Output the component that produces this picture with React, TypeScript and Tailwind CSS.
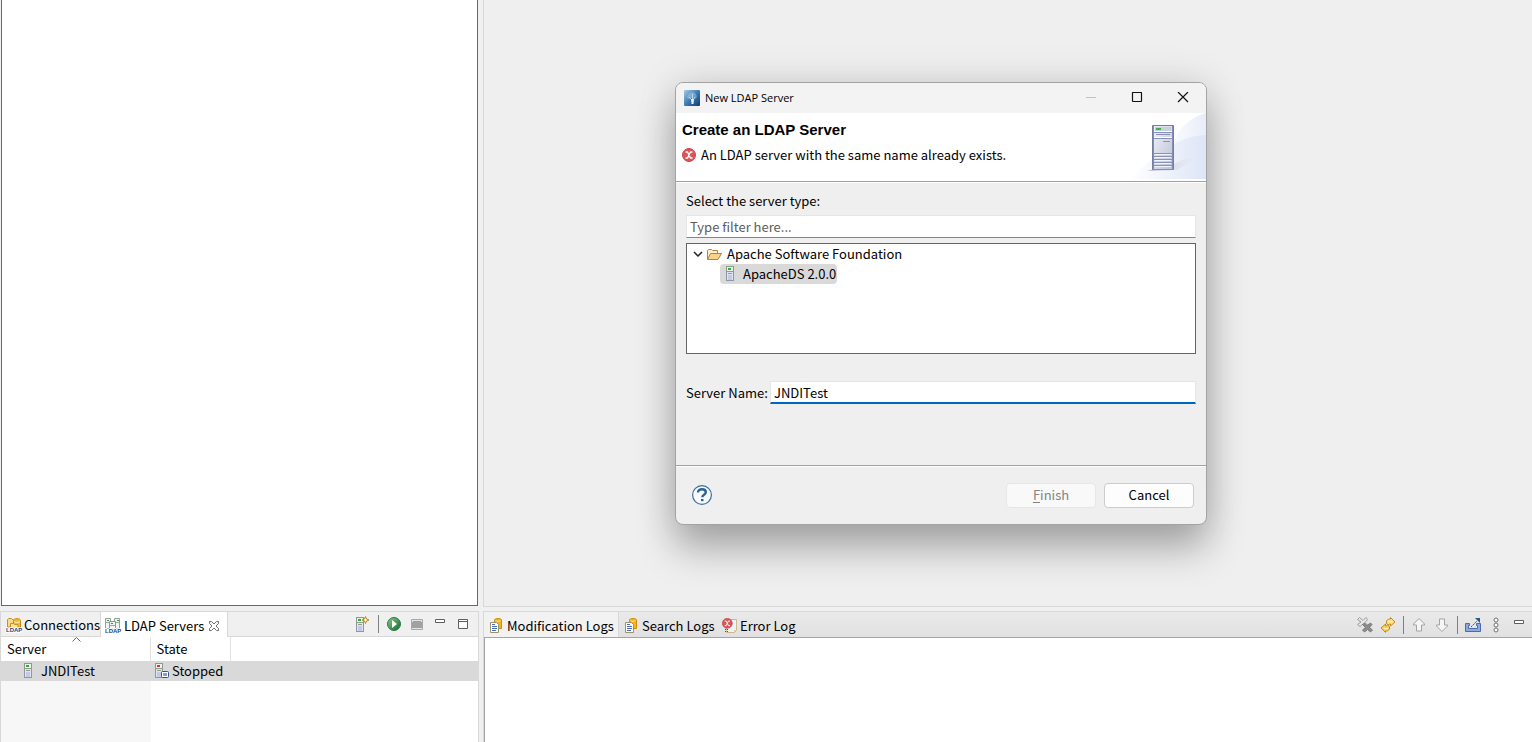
import { useState } from 'react';
import type { ReactNode } from 'react';
import clsx from 'clsx';

interface IconProps {
  children: ReactNode;
  size?: number;
  className?: string;
}

function Icon({ children, size = 16, className }: IconProps) {
  return (
    <svg width={size} height={size} viewBox={`0 0 ${size} ${size}`} fill="none" aria-hidden="true" className={clsx('shrink-0', className)}>
      {children}
    </svg>
  );
}

/* one small tower, drawn at the origin so other icons can reuse it */
function Tower({ led = '#2fa84f' }: { led?: string }) {
  return (
    <>
      <rect x="0.5" y="0.5" width="7" height="5" fill="#eef3ea" stroke="#8c9c83" />
      <rect x="0.5" y="5.5" width="7" height="9" fill="#dfe3f2" stroke="#9096a6" />
      <rect x="2" y="2" width="3" height="2" fill={led} />
      <path d="M1 5.5h6M2 7.5h4" stroke="#8fa083" />
      <rect x="2" y="9" width="4" height="5" fill="#c3c9e6" />
    </>
  );
}

function ServerIcon() {
  return (
    <Icon>
      <g transform="translate(4 0)"><Tower /></g>
    </Icon>
  );
}

function StoppedServerIcon() {
  return (
    <Icon>
      <Tower led="#d8343c" />
      <rect x="6.5" y="8.5" width="7" height="6" rx="1" fill="#fff" stroke="#2f509a" />
      <rect x="8" y="10" width="4" height="3" fill="#7c9fd6" />
    </Icon>
  );
}

function NewServerIcon() {
  return (
    <Icon>
      <g transform="translate(1 1)"><Tower /></g>
      <path d="M10.500.5l1 2.500L14 4l-2.500 1-1 2.500-1-2.500L7 4l2.500-1z" fill="#fff9d8" stroke="#b08a1c" />
    </Icon>
  );
}

function LdapLabel() {
  return (
    <text x="0" y="15" fontSize="6" fontWeight="700" fontFamily="Liberation Sans, sans-serif" fill="#1d4384" stroke="#fff" strokeWidth="1.500" paintOrder="stroke">
      LDAP
    </text>
  );
}

function ConnectionsIcon() {
  return (
    <Icon className="overflow-visible">
      <path d="M1.500 10V2.500L2.500 1.500h3L7 3h1v7z" fill="#f9d98a" stroke="#c98f1f" />
      <path d="M7.500 3.500C7.500 1 14.500 1 14.500 3.500v7h-7z" fill="#f5b93a" stroke="#c98615" />
      <path d="M8 4.500c1.500 1.500 4.500 1.500 6 0" stroke="#fff0b4" />
      <path d="M4.500 11V6.500h3l1 1H12V11" fill="#fbe3a1" stroke="#c98f1f" />
      <LdapLabel />
    </Icon>
  );
}

function LdapServersIcon() {
  return (
    <Icon className="overflow-visible">
      <path d="M.5.5h5v10h-5zM9.500.5h5v10h-5z" fill="#eff3f4" stroke="#93a19a" />
      <path d="M4.500 3.500h6v8h-6z" fill="#eef5ec" stroke="#879b83" />
      <path d="M1 4.500h3M11 4.500h3M5 7.500h5" stroke="#99a9a0" />
      <path d="M2 2h2v1H2zM12 2h2v1h-2zM6 5h2v1H6z" fill="#249c3e" />
      <LdapLabel />
    </Icon>
  );
}

function LogIcon() {
  return (
    <Icon>
      <path d="M5.500 2C5.500 0 12.500 0 12.500 2v8.500h-7z" fill="#f7b21e" stroke="#d28c0c" />
      <path d="M6.500 2.500c1.500 1 3.500 1 5 0" stroke="#ffe58a" />
      <path d="M1.500 4.500h6l2 2v8h-8z" fill="#fdfdf8" stroke="#9c9468" />
      <path d="M3 6.500h3M3 8.500h5M3 10.500h5M3 12.500h4" stroke="#4a6eb8" />
    </Icon>
  );
}

function ErrorGlyph() {
  return (
    <>
      <circle cx="7" cy="7" r="6.500" fill="#dc5457" stroke="#c9474c" />
      <path d="M3.500 4h2l3 6h2M10.500 4h-2l-3 6h-2" stroke="#fff" strokeWidth="1.300" />
    </>
  );
}

function ErrorLogIcon() {
  return (
    <Icon>
      <path d="M4.500 1.500h10v11l-2 2h-8z" fill="#e9f3fa" stroke="#d0b88e" />
      <path d="M12 14.500V12h3z" fill="#f0c99c" />
      <g transform="scale(.76)"><ErrorGlyph /></g>
      <path d="M3 11h1v1H3zM5 11h1v1H5zM3 13h1v1H3zM5 13h1v1H5z" fill="#2d5aa0" />
    </Icon>
  );
}

function RunIcon() {
  return (
    <Icon>
      <defs>
        <linearGradient id="run" x1="0" y1="0" x2="1" y2="1">
          <stop stopColor="#8cc98a" />
          <stop offset="1" stopColor="#0e6a2e" />
        </linearGradient>
      </defs>
      <circle cx="8" cy="8" r="6.500" fill="url(#run)" stroke="#2b7b40" />
      <path d="M6 4v8l5-4z" fill="#fff" />
    </Icon>
  );
}

function StopIcon() {
  return (
    <Icon>
      <path d="M2.500 3.500h11v10h-11z" fill="#e4e4e4" stroke="#a8a8a8" />
      <path d="M4 5h8v1h1v6H3V6h1z" fill="#a1a1a1" />
    </Icon>
  );
}

function MinimizeIcon() {
  return (
    <Icon><path d="M3.500 3.500h9v3h-9z" fill="#fff" stroke="#5f5f5f" /></Icon>
  );
}

function MaximizeIcon() {
  return (
    <Icon><path d="M3.500 3.500h9v9h-9zM4 5.500h8" fill="#fff" stroke="#5f5f5f" /></Icon>
  );
}

function TabCloseIcon() {
  return (
    <Icon size={12}>
      <path d="M1.500 1.500h2L6 4l2.500-2.500h2v2L8 6l2.500 2.500v2h-2L6 8l-2.500 2.500h-2v-2L4 6 1.500 3.500z" fill="#fff" stroke="#707070" />
    </Icon>
  );
}

function ClearIcon() {
  return (
    <Icon>
      <path d="M.5 2.500l2-2L6 3.500l3-3 1.500 2L8 5.500l2 2-1.500 2L6 7 3 9.500.500 7.500 4 5z" fill="#e9e9e9" stroke="#9b9b9b" />
      <path d="M5.500 7.500l2-1.500L10 8.500 13.500 6l1.500 1.500-2.500 3L15.500 13l-2 2-3-2.500L7.500 15l-2-2 3-2.500z" fill="#8b8b8b" stroke="#7c7c7c" />
    </Icon>
  );
}

function RefreshIcon() {
  return (
    <Icon>
      <path d="M6.500 6V4l2-2h2V.500L15 5l-4.500 4V7h-1L8 8.500z" fill="#ffe08a" stroke="#c78a15" />
      <path d="M9.500 10v2l-2 2h-2v1.500L1 11l4.500-4v2h1L8 7.500z" fill="#ffd05a" stroke="#c78a15" />
      <path d="M8 4.500h4M8 11.500H4" stroke="#fff3bd" />
    </Icon>
  );
}

function ArrowIcon({ down }: { down?: boolean }) {
  return (
    <Icon className={clsx(down && 'rotate-180')}>
      <path d="M8 1.500L13.500 7v1h-3v6h-5V8h-3V7z" fill="#f5f5f5" stroke="#a3a3a3" />
    </Icon>
  );
}

function ExportIcon() {
  return (
    <Icon>
      <path d="M.5 6.500h4v2h-1v3h9v-3h-1v-2h4v8H.5z" fill="#8eaadb" stroke="#4a6bac" />
      <path d="M6 10l6-6" stroke="#225b93" strokeDasharray="2 1" />
      <path d="M10 1h5v5z" fill="#225b93" />
    </Icon>
  );
}

function MenuIcon() {
  return (
    <Icon>
      <g fill="#fff" stroke="#6f6f6f">
        <circle cx="8" cy="3" r="2" />
        <circle cx="8" cy="8" r="2" />
        <circle cx="8" cy="13" r="2" />
      </g>
    </Icon>
  );
}

function FolderIcon() {
  return (
    <Icon>
      <path d="M1.500 13.500v-9l1-1h3l1 1h5v3" fill="#fdf0cf" stroke="#b5833c" />
      <path d="M1.500 13.500l3-6h11l-3.500 6z" fill="#f7d38b" stroke="#b5833c" />
    </Icon>
  );
}

function AppIcon() {
  return (
    <Icon>
      <defs>
        <linearGradient id="app" x1="0" y1="0" x2="1" y2="1">
          <stop stopColor="#a5cbe6" />
          <stop offset=".5" stopColor="#3c7cb5" />
          <stop offset="1" stopColor="#123c75" />
        </linearGradient>
      </defs>
      <rect width="16" height="16" rx="1" fill="url(#app)" />
      <path d="M3 8l1-3 2-2 3-1 3 2 1 3-2 2-3-1-3 1z" fill="#cfe4f3" fillOpacity=".35" />
      <path d="M8 10L5 7M9 10l2-3M8.500 9V4" stroke="#dcecf7" strokeOpacity=".7" />
      <path d="M7 9h3l-.5 5h-2z" fill="#e9f3fa" />
    </Icon>
  );
}

function WizardBanner() {
  return (
    <svg width="76" height="66" viewBox="0 0 76 66" aria-hidden="true" className="block shrink-0 self-start">
      <defs>
        <linearGradient id="sweep" x1="0" y1="0" x2="1" y2="0">
          <stop stopColor="#fff" />
          <stop offset="1" stopColor="#dde5f7" />
        </linearGradient>
        <linearGradient id="shade" x1="0" y1="0" x2="1" y2="0">
          <stop stopColor="#b9b2c4" />
          <stop offset="1" stopColor="#e0e2f0" stopOpacity="0" />
        </linearGradient>
        <linearGradient id="case" x1="0" y1="0" x2="1" y2="1">
          <stop stopColor="#f2f4fa" />
          <stop offset="1" stopColor="#b9bfd4" />
        </linearGradient>
      </defs>
      <path d="M76 0C52 6 40 26 34 66h42z" fill="url(#sweep)" fillOpacity=".7" />
      <path d="M76 22C54 22 30 36 0 66h76z" fill="url(#sweep)" />
      <path d="M17 58l30-1 20-12-13 1-10 5z" fill="url(#shade)" />
      <path d="M22.500 12.500h21v44h-21z" fill="url(#case)" stroke="#737da1" />
      <path d="M23.500 13v43M42.500 13v43M22 56.500h22" stroke="#868fb3" />
      <path d="M25 14h16v4H25z" fill="#c5d3d9" />
      <path d="M26 15h5v2h-5z" fill="#3db34c" />
      <path d="M24 18.500h18M24 24.500h18" stroke="#fff" />
      <path d="M24 19.500h18M26 21.500h14M24 25.500h18M33 28.500h7M24 40.500h18M24 43.500h18M24 46.500h18M24 49.500h18M24 52.500h18" stroke="#8891b8" />
      <path d="M25 41.500h16M25 44.500h16M25 47.500h16M25 50.500h16M25 53.500h16" stroke="#f0f3fb" />
    </svg>
  );
}

function ToolButton({ label, children, disabled }: { label: string; children: ReactNode; disabled?: boolean }) {
  return (
    <button type="button" title={label} aria-label={label} disabled={disabled} className="flex size-4 items-center justify-center">
      {children}
    </button>
  );
}

function Divider() {
  return <span className="h-[18px] w-px bg-[#808080]" />;
}

const servers = [{ name: 'JNDITest', state: 'Stopped' }];

function ServersView() {
  return (
    <section className="flex w-[479px] shrink-0 flex-col border-x border-t border-[#d8d8d8] bg-white">
      <div className="flex h-[25px] items-stretch bg-[#f0f0f0] text-[13px]">
        <div role="tablist" className="flex">
          <button type="button" role="tab" aria-selected="false" className="flex w-[99px] items-center gap-0.5 whitespace-nowrap border-b border-[#d8d8d8] pl-[5px] pt-0.5">
            <ConnectionsIcon />
            <span>Connections</span>
          </button>
          <div className="flex w-32 items-center gap-1 whitespace-nowrap border-x border-[#d8d8d8] bg-white pl-1 pt-0.5">
            <button type="button" role="tab" aria-selected="true" className="flex w-[99px] items-center gap-[3px]">
              <LdapServersIcon />
              <span>LDAP Servers</span>
            </button>
            <button type="button" aria-label="Close LDAP Servers"><TabCloseIcon /></button>
          </div>
        </div>
        <div className="flex flex-1 items-center justify-end gap-[7px] border-b border-[#d8d8d8] pr-[7px]">
          <ToolButton label="New Server"><NewServerIcon /></ToolButton>
          <Divider />
          <ToolButton label="Run"><RunIcon /></ToolButton>
          <ToolButton label="Stop" disabled><StopIcon /></ToolButton>
          <ToolButton label="Minimize"><MinimizeIcon /></ToolButton>
          <ToolButton label="Maximize"><MaximizeIcon /></ToolButton>
        </div>
      </div>

      <div className="flex flex-1 flex-col">
        <table className="w-full table-fixed border-collapse text-left text-[13px]">
          <colgroup>
            <col className="w-[149px]" />
            <col className="w-20" />
            <col />
          </colgroup>
          <thead>
            <tr className="h-6">
              <th className="relative border-r border-[#e2e2e2] p-0 pl-1.5 font-normal">
                Server
                <svg width="9" height="5" viewBox="0 0 9 5" fill="none" aria-hidden="true" className="absolute left-[71px] top-0">
                  <path d="M.5 4.500l4-4 4 4" stroke="#666" />
                </svg>
              </th>
              <th className="border-r border-[#e2e2e2] p-0 pl-1.5 font-normal">State</th>
              <th />
            </tr>
          </thead>
          <tbody>
            {servers.map((server) => (
              <tr key={server.name} className="h-5 bg-[#d9d9d9]">
                <td className="p-0 pl-[19px]">
                  <div className="flex items-center gap-[5px] leading-5"><ServerIcon />{server.name}</div>
                </td>
                <td className="p-0 pl-[5px]">
                  <div className="flex items-center gap-px leading-5"><StoppedServerIcon />{server.state}</div>
                </td>
                <td />
              </tr>
            ))}
          </tbody>
        </table>
        <div className="w-[150px] flex-1 bg-[#f7f7f7]" />
      </div>
    </section>
  );
}

const logTabs = [
  { label: 'Modification Logs', icon: <LogIcon />, width: 'w-[135px]' },
  { label: 'Search Logs', icon: <LogIcon />, width: 'w-[98px]' },
  { label: 'Error Log', icon: <ErrorLogIcon />, width: 'w-[84px]' },
];

function LogsView() {
  const [active, setActive] = useState('Modification Logs');

  return (
    <section className="flex min-w-0 flex-1 flex-col border-l border-t border-[#d8d8d8]">
      <div className="flex h-[25px] shrink-0 justify-between bg-linear-to-b from-[#eaeaea] to-[#e1e1e1] text-[13px]">
        <div role="tablist" className="flex">
          {logTabs.map((tab) => (
            <button
              key={tab.label}
              type="button"
              role="tab"
              aria-selected={active === tab.label}
              onClick={() => setActive(tab.label)}
              className={clsx(
                'flex items-center gap-0.5 whitespace-nowrap pl-[5px] pt-0.5',
                tab.width,
                active === tab.label && 'border-r border-[#d8d8d8] bg-[#f2f2f2]',
              )}
            >
              {tab.icon}
              <span>{tab.label}</span>
            </button>
          ))}
        </div>
        <div className="flex items-center gap-[7px] pr-[5px]">
          <ToolButton label="Clear" disabled><ClearIcon /></ToolButton>
          <ToolButton label="Refresh"><RefreshIcon /></ToolButton>
          <Divider />
          <ToolButton label="Newer" disabled><ArrowIcon /></ToolButton>
          <ToolButton label="Older" disabled><ArrowIcon down /></ToolButton>
          <Divider />
          <ToolButton label="Export"><ExportIcon /></ToolButton>
          <ToolButton label="View Menu"><MenuIcon /></ToolButton>
          <ToolButton label="Minimize"><MinimizeIcon /></ToolButton>
        </div>
      </div>
      <div className="flex-1 border-l border-t border-[#a5a5a9] bg-white" />
    </section>
  );
}

function NewServerDialog() {
  const [filter, setFilter] = useState('');
  const [name, setName] = useState('JNDITest');

  return (
    <div
      role="dialog"
      aria-labelledby="dialog-title"
      className="absolute left-[675px] top-[82px] flex w-[532px] flex-col overflow-hidden rounded-lg border border-[#a3a3a3] bg-[#efefef] text-[13px] shadow-[0_24px_38px_rgba(0,0,0,0.28),0_0_40px_rgba(0,0,0,0.12)]"
    >
      <div className="flex h-[30px] items-center bg-[#f3f3f3] pl-2">
        <AppIcon />
        <h1 id="dialog-title" className="flex-1 pl-[5px] font-['Open_Sans',sans-serif] text-[11px]">New LDAP Server</h1>
        <button type="button" aria-label="Minimize" disabled className="flex h-full w-[46px] items-center justify-center">
          <Icon size={12}><path d="M1 5.500h10" stroke="#c2c2c2" /></Icon>
        </button>
        <button type="button" aria-label="Maximize" className="flex h-full w-[46px] items-center justify-center">
          <Icon size={12}><rect x="1.500" y=".5" width="9" height="9" rx=".5" stroke="#111" strokeWidth="1.200" /></Icon>
        </button>
        <button type="button" aria-label="Close" className="flex h-full w-[46px] items-center justify-center">
          <Icon size={12}><path d="M1 0l10 10M11 0L1 10" stroke="#111" strokeWidth="1.200" /></Icon>
        </button>
      </div>

      <header className="flex h-[69px] justify-between border-b border-[#a0a0a0] bg-white pl-1.5">
        <div className="flex flex-col gap-[7px] pt-[7px]">
          <h2 className="font-['Liberation_Sans',Arial,sans-serif] text-[15px] font-bold leading-5 text-black">Create an LDAP Server</h2>
          <p className="flex items-center gap-[5px] leading-4">
            <Icon size={14}><ErrorGlyph /></Icon>
            An LDAP server with the same name already exists.
          </p>
        </div>
        <WizardBanner />
      </header>

      <div className="flex h-[283px] flex-col border-t border-white px-2.5 pt-2">
        <label htmlFor="filter" className="leading-5">Select the server type:</label>
        <input
          id="filter"
          type="text"
          value={filter}
          onChange={(e) => setFilter(e.target.value)}
          placeholder="Type filter here..."
          className="mt-1 h-[23px] border border-[#e5e5e5] border-b-[#868686] bg-white px-[3px] outline-none placeholder:text-[#5c5c5c]"
        />
        <ul role="tree" aria-label="Server types" className="mt-[5px] h-[111px] border border-[#646464] bg-white leading-5">
          <li role="treeitem" aria-expanded="true">
            <div className="flex items-center pl-1.5">
              <Icon size={10}><path d="M1 3l4 4 4-4" stroke="#222" strokeWidth="1.500" /></Icon>
              <span className="flex items-center gap-[5px] pl-[3px]"><FolderIcon />Apache Software Foundation</span>
            </div>
            <ul role="group" className="pl-[33px]">
              <li role="treeitem" aria-selected="true" className="flex w-[117px] items-center gap-[5px] whitespace-nowrap rounded-sm bg-[#d9d9d9] pl-0.5">
                <ServerIcon />
                ApacheDS 2.0.0
              </li>
            </ul>
          </li>
        </ul>
        <div className="mt-[27px] flex items-center gap-1">
          <label htmlFor="server-name" className="w-20 shrink-0 whitespace-nowrap">Server Name:</label>
          <input
            id="server-name"
            type="text"
            value={name}
            onChange={(e) => setName(e.target.value)}
            className="h-[23px] min-w-0 flex-1 border border-b-2 border-[#e5e5e5] border-b-[#0067c0] bg-white px-[3px] outline-none"
          />
        </div>
      </div>

      <footer className="flex h-[59px] items-center justify-between border-t border-[#a0a0a0] pl-4 pr-3 shadow-[inset_0_1px_0_#fff]">
        <button type="button" aria-label="Help">
          <svg width="20" height="20" viewBox="0 0 20 20" fill="none" aria-hidden="true">
            <circle cx="10" cy="10" r="9.400" fill="#f6fafd" stroke="#3a709f" strokeWidth="1.200" />
            <path d="M6 7.600C6 5 8 4.200 10 4.200s3.800 1 3.800 3c0 2.600-3.500 2.400-3.500 5" stroke="#2a6398" strokeWidth="2.400" />
            <path d="M9 14h2.500v2.200H9z" fill="#2a6398" />
          </svg>
        </button>
        <div className="flex gap-2">
          <button type="button" disabled className="h-[25px] w-[90px] rounded border border-[#e6e6e6] bg-[#f9f9f9] text-[#838383]">
            <span className="underline underline-offset-2">F</span>inish
          </button>
          <button type="button" className="h-[25px] w-[90px] rounded border border-[#cccccc] bg-[#fdfdfd]">Cancel</button>
        </div>
      </footer>
    </div>
  );
}

export default function App() {
  return (
    <main className="relative flex h-screen min-h-[640px] flex-col gap-1 overflow-hidden bg-[#f0f0f0] font-['Noto_Sans_CJK_SC','Open_Sans',sans-serif] text-black">
      <div className="flex min-h-0 flex-1 gap-1">
        <section aria-label="Browser" className="mb-px ml-px w-[477px] shrink-0 border border-t-0 border-[#696969] bg-white" />
        <section aria-label="Editor" className="ml-px flex-1 border-b border-l border-[#d8d8d8] bg-[#efefef]" />
      </div>
      <div className="flex h-[131px] shrink-0 gap-1">
        <ServersView />
        <LogsView />
      </div>
      <NewServerDialog />
    </main>
  );
}
